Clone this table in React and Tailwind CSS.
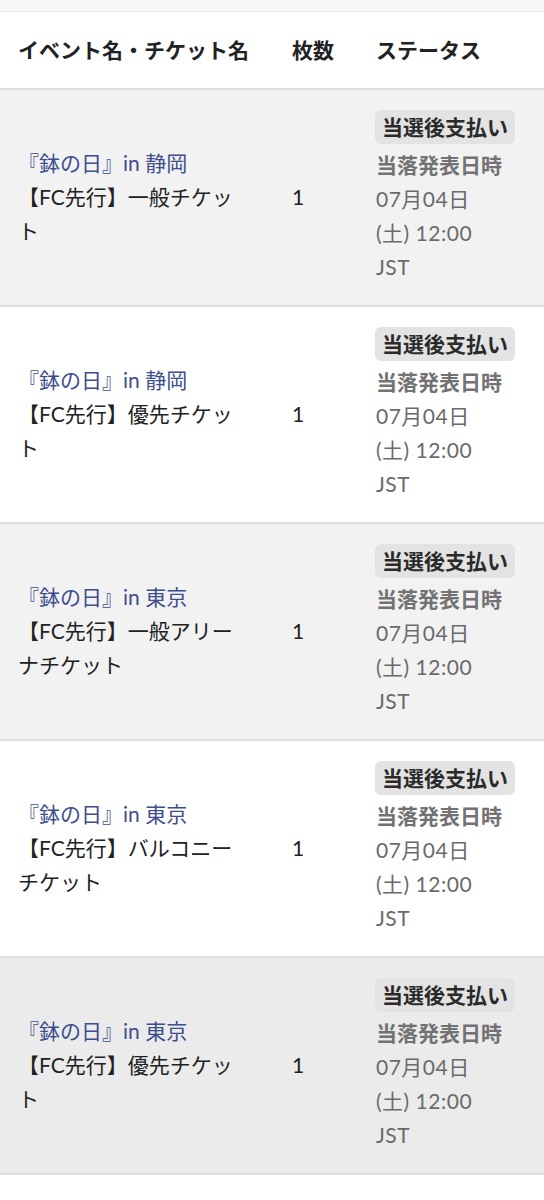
const ROWS = [
  { venue: '静岡', ticket: '【FC先行】一般チケット', bg: 'bg-[#f2f2f2]' },
  { venue: '静岡', ticket: '【FC先行】優先チケット', bg: 'bg-white' },
  { venue: '東京', ticket: '【FC先行】一般アリーナチケット', bg: 'bg-[#f2f2f2]' },
  { venue: '東京', ticket: '【FC先行】バルコニーチケット', bg: 'bg-white' },
  { venue: '東京', ticket: '【FC先行】優先チケット', bg: 'bg-[#ebebeb]' },
];

const font = { fontFamily: 'Lato, "Noto Sans CJK JP", sans-serif' };

function TicketRow({ row }) {
  return (
    <div className={`grid grid-cols-[292px_84px_1fr] items-center pt-[20px] pb-[21px] border-b-2 border-[#dde0e3] ${row.bg}`}>
      <div className="pl-[18px] pr-[40px] text-[21px] leading-[34px] text-[#222]">
        <a className="block text-[#3d4d8e]">『鉢の日』in {row.venue}</a>
        <span>{row.ticket}</span>
      </div>
      <div className="text-[21px] leading-[34px] text-[#222]">1</div>
      <div className="text-[21px] leading-[34px] text-[#6a6a6a]">
        <span className="inline-block px-[7px] rounded-[6px] bg-[#e3e3e3] font-bold text-[#2a2a2a] leading-[34px] whitespace-nowrap -ml-[1px]">
          当選後支払い
        </span>
        <div className="mt-[4px] font-bold text-[#727272]">当落発表日時</div>
        <div className="tracking-[0.5px]">07月04日</div>
        <div className="tracking-[0.5px]">(土) 12:00</div>
        <div className="tracking-[0.5px]">JST</div>
      </div>
    </div>
  );
}

export default function App() {
  return (
    <div className="w-[544px] min-h-[1200px] bg-white" style={font}>
      <div className="h-[12px] bg-[#f7f7f7] border-b border-[#e8e8e8]" />
      <div className="grid grid-cols-[292px_84px_1fr] items-center h-[78px] border-b-2 border-[#dde0e3] text-[21px] font-bold text-[#222]">
        <div className="pl-[18px] whitespace-nowrap">イベント名・チケット名</div>
        <div>枚数</div>
        <div>ステータス</div>
      </div>
      {ROWS.map((row, i) => (
        <TicketRow key={i} row={row} />
      ))}
    </div>
  );
}
